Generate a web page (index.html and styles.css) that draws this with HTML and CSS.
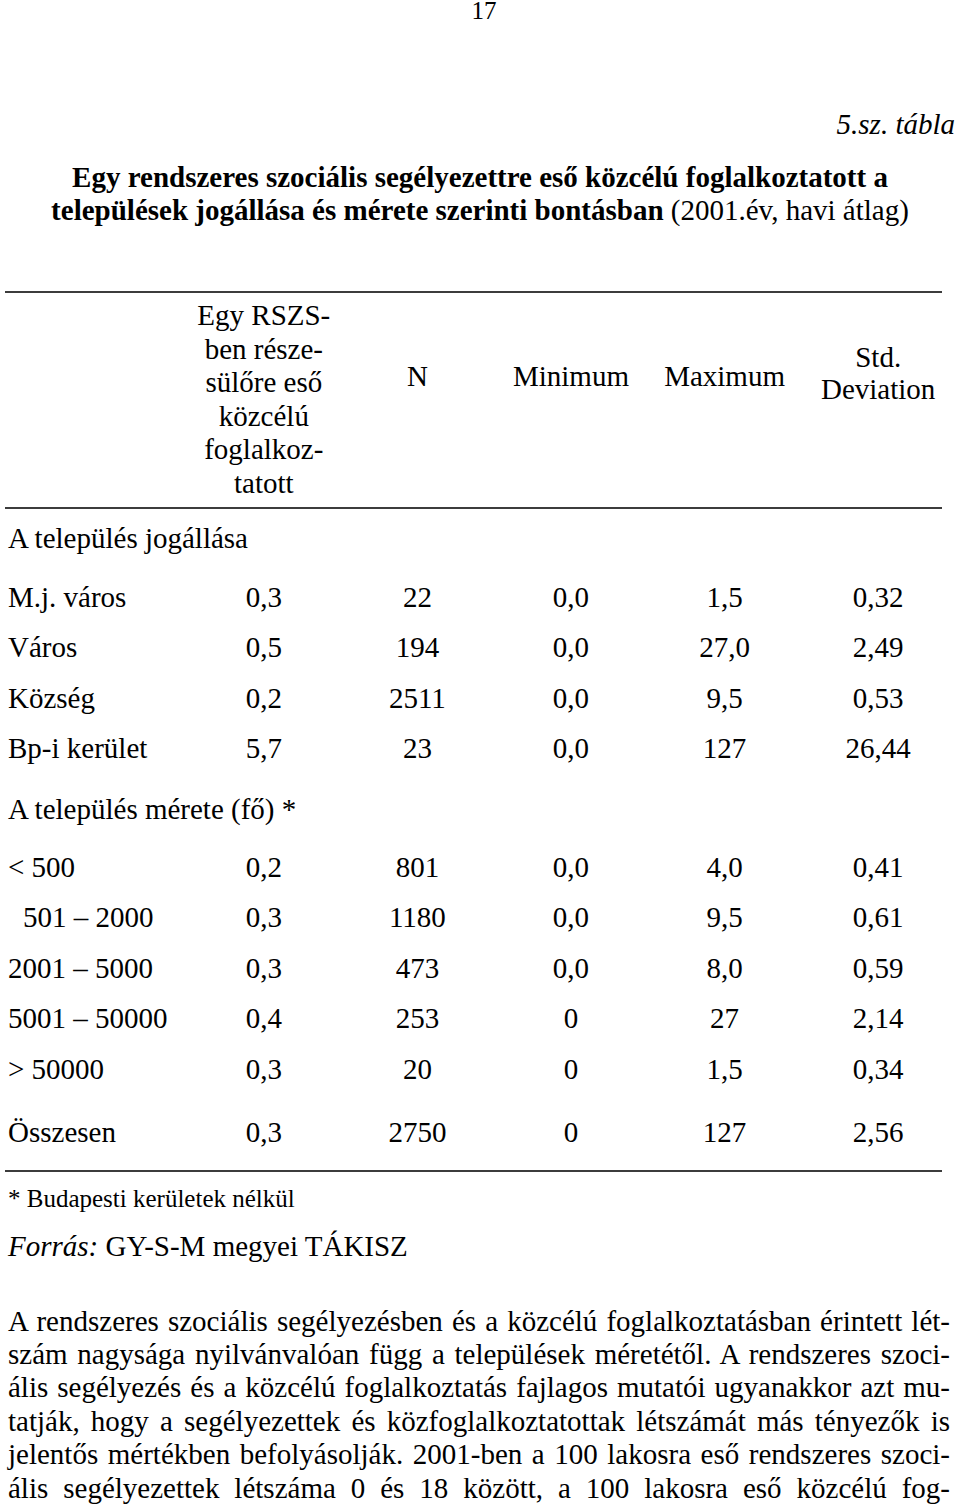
FILE: index.html
```html
<!DOCTYPE html>
<html lang="hu">
<head>
<meta charset="utf-8">
<title>5.sz. tábla</title>
<link rel="stylesheet" href="styles.css">
</head>
<body>
<div class="page">
  <div class="page-num">17</div>
  <div class="table-label">5.sz. tábla</div>
  <h1 class="title"><b>Egy rendszeres szociális segélyezettre eső közcélú foglalkoztatott a<br>települések jogállása és mérete szerinti bontásban</b> (2001.év, havi átlag)</h1>

  <div class="table">
    <div class="thead">
      <div class="cell h-stub"></div>
      <div class="cell h-multi">Egy RSZS-<br>ben része-<br>sülőre eső<br>közcélú<br>foglalkoz-<br>tatott</div>
      <div class="cell h-single">N</div>
      <div class="cell h-single">Minimum</div>
      <div class="cell h-single">Maximum</div>
      <div class="cell h-two">Std.<br>Deviation</div>
    </div>
    <div class="tbody">
      <div class="group g1">A település jogállása</div>
      <div class="row"><div class="stub">M.j. város</div><div class="num">0,3</div><div class="num">22</div><div class="num">0,0</div><div class="num">1,5</div><div class="num">0,32</div></div>
      <div class="row"><div class="stub">Város</div><div class="num">0,5</div><div class="num">194</div><div class="num">0,0</div><div class="num">27,0</div><div class="num">2,49</div></div>
      <div class="row"><div class="stub">Község</div><div class="num">0,2</div><div class="num">2511</div><div class="num">0,0</div><div class="num">9,5</div><div class="num">0,53</div></div>
      <div class="row"><div class="stub">Bp-i kerület</div><div class="num">5,7</div><div class="num">23</div><div class="num">0,0</div><div class="num">127</div><div class="num">26,44</div></div>
      <div class="group g2">A település mérete (fő) *</div>
      <div class="row"><div class="stub">&lt; 500</div><div class="num">0,2</div><div class="num">801</div><div class="num">0,0</div><div class="num">4,0</div><div class="num">0,41</div></div>
      <div class="row"><div class="stub indent">501 – 2000</div><div class="num">0,3</div><div class="num">1180</div><div class="num">0,0</div><div class="num">9,5</div><div class="num">0,61</div></div>
      <div class="row"><div class="stub">2001 – 5000</div><div class="num">0,3</div><div class="num">473</div><div class="num">0,0</div><div class="num">8,0</div><div class="num">0,59</div></div>
      <div class="row"><div class="stub">5001 – 50000</div><div class="num">0,4</div><div class="num">253</div><div class="num">0</div><div class="num">27</div><div class="num">2,14</div></div>
      <div class="row"><div class="stub">&gt; 50000</div><div class="num">0,3</div><div class="num">20</div><div class="num">0</div><div class="num">1,5</div><div class="num">0,34</div></div>
      <div class="row total"><div class="stub">Összesen</div><div class="num">0,3</div><div class="num">2750</div><div class="num">0</div><div class="num">127</div><div class="num">2,56</div></div>
    </div>
  </div>

  <p class="footnote">* Budapesti kerületek nélkül</p>
  <p class="source"><i>Forrás:</i> GY-S-M megyei TÁKISZ</p>

  <p class="text">
    <span class="line">A rendszeres szociális segélyezésben és a közcélú foglalkoztatásban érintett lét-</span>
    <span class="line">szám nagysága nyilvánvalóan függ a települések méretétől. A rendszeres szoci-</span>
    <span class="line">ális segélyezés és a közcélú foglalkoztatás fajlagos mutatói ugyanakkor azt mu-</span>
    <span class="line">tatják, hogy a segélyezettek és közfoglalkoztatottak létszámát más tényezők is</span>
    <span class="line">jelentős mértékben befolyásolják. 2001-ben a 100 lakosra eső rendszeres szoci-</span>
    <span class="line">ális segélyezettek létszáma 0 és 18 között, a 100 lakosra eső közcélú fog-</span>
  </p>
</div>
</body>
</html>
```

FILE: styles.css
```css
html, body {
  margin: 0;
  padding: 0;
  background: #fff;
}

body {
  font-family: "Liberation Serif", "Times New Roman", serif;
  color: #000;
  font-size: 29px;
}

.page {
  width: 960px;
  box-sizing: border-box;
  padding: 0 8px;
}

.page-num {
  font-size: 25px;
  line-height: 22px;
  text-align: center;
  padding-left: 8px;
}

.table-label {
  margin-top: 86px;
  margin-right: -3px;
  text-align: right;
  font-style: italic;
  line-height: 32px;
}

.title {
  margin: 21px 0 0;
  font-size: 29px;
  font-weight: normal;
  line-height: 33px;
  text-align: center;
}

.table {
  margin-top: 64px;
  margin-left: -3px;
  width: 937px;
  border-top: 2px solid #3c3c3c;
  border-bottom: 2px solid #3c3c3c;
}

.thead {
  display: grid;
  grid-template-columns: 182px repeat(5, 153.6px);
  height: 214px;
  border-bottom: 2px solid #3c3c3c;
}

.cell {
  text-align: center;
}

.h-multi {
  padding-top: 6px;
  line-height: 33.6px;
}

.h-single {
  padding-top: 67px;
  line-height: 33px;
}

.h-two {
  padding-top: 48px;
  line-height: 32px;
}

.tbody {
  display: flex;
  flex-direction: column;
  padding-left: 3px;
}

.group {
  line-height: 33px;
}

.g1 {
  padding-top: 13px;
  height: 50px;
}

.g2 {
  padding-top: 19px;
  height: 49px;
}

.row {
  display: grid;
  grid-template-columns: 179px repeat(5, 153.6px);
  height: 50.5px;
  align-items: center;
  line-height: 33px;
}

.row.total {
  height: 75px;
  align-items: start;
  padding-top: 21px;
  box-sizing: border-box;
}

.stub {
  text-align: left;
  white-space: nowrap;
}

.indent {
  padding-left: 15px;
}

.num {
  text-align: center;
}

.footnote {
  margin: 12px 0 0;
  font-size: 25px;
  line-height: 30px;
}

.source {
  margin: 16px 0 0;
  line-height: 33px;
}

.text {
  margin: 42px 0 0;
  width: 942px;
  line-height: 33.4px;
}

.line {
  display: block;
  text-align: justify;
  text-align-last: justify;
}
```
